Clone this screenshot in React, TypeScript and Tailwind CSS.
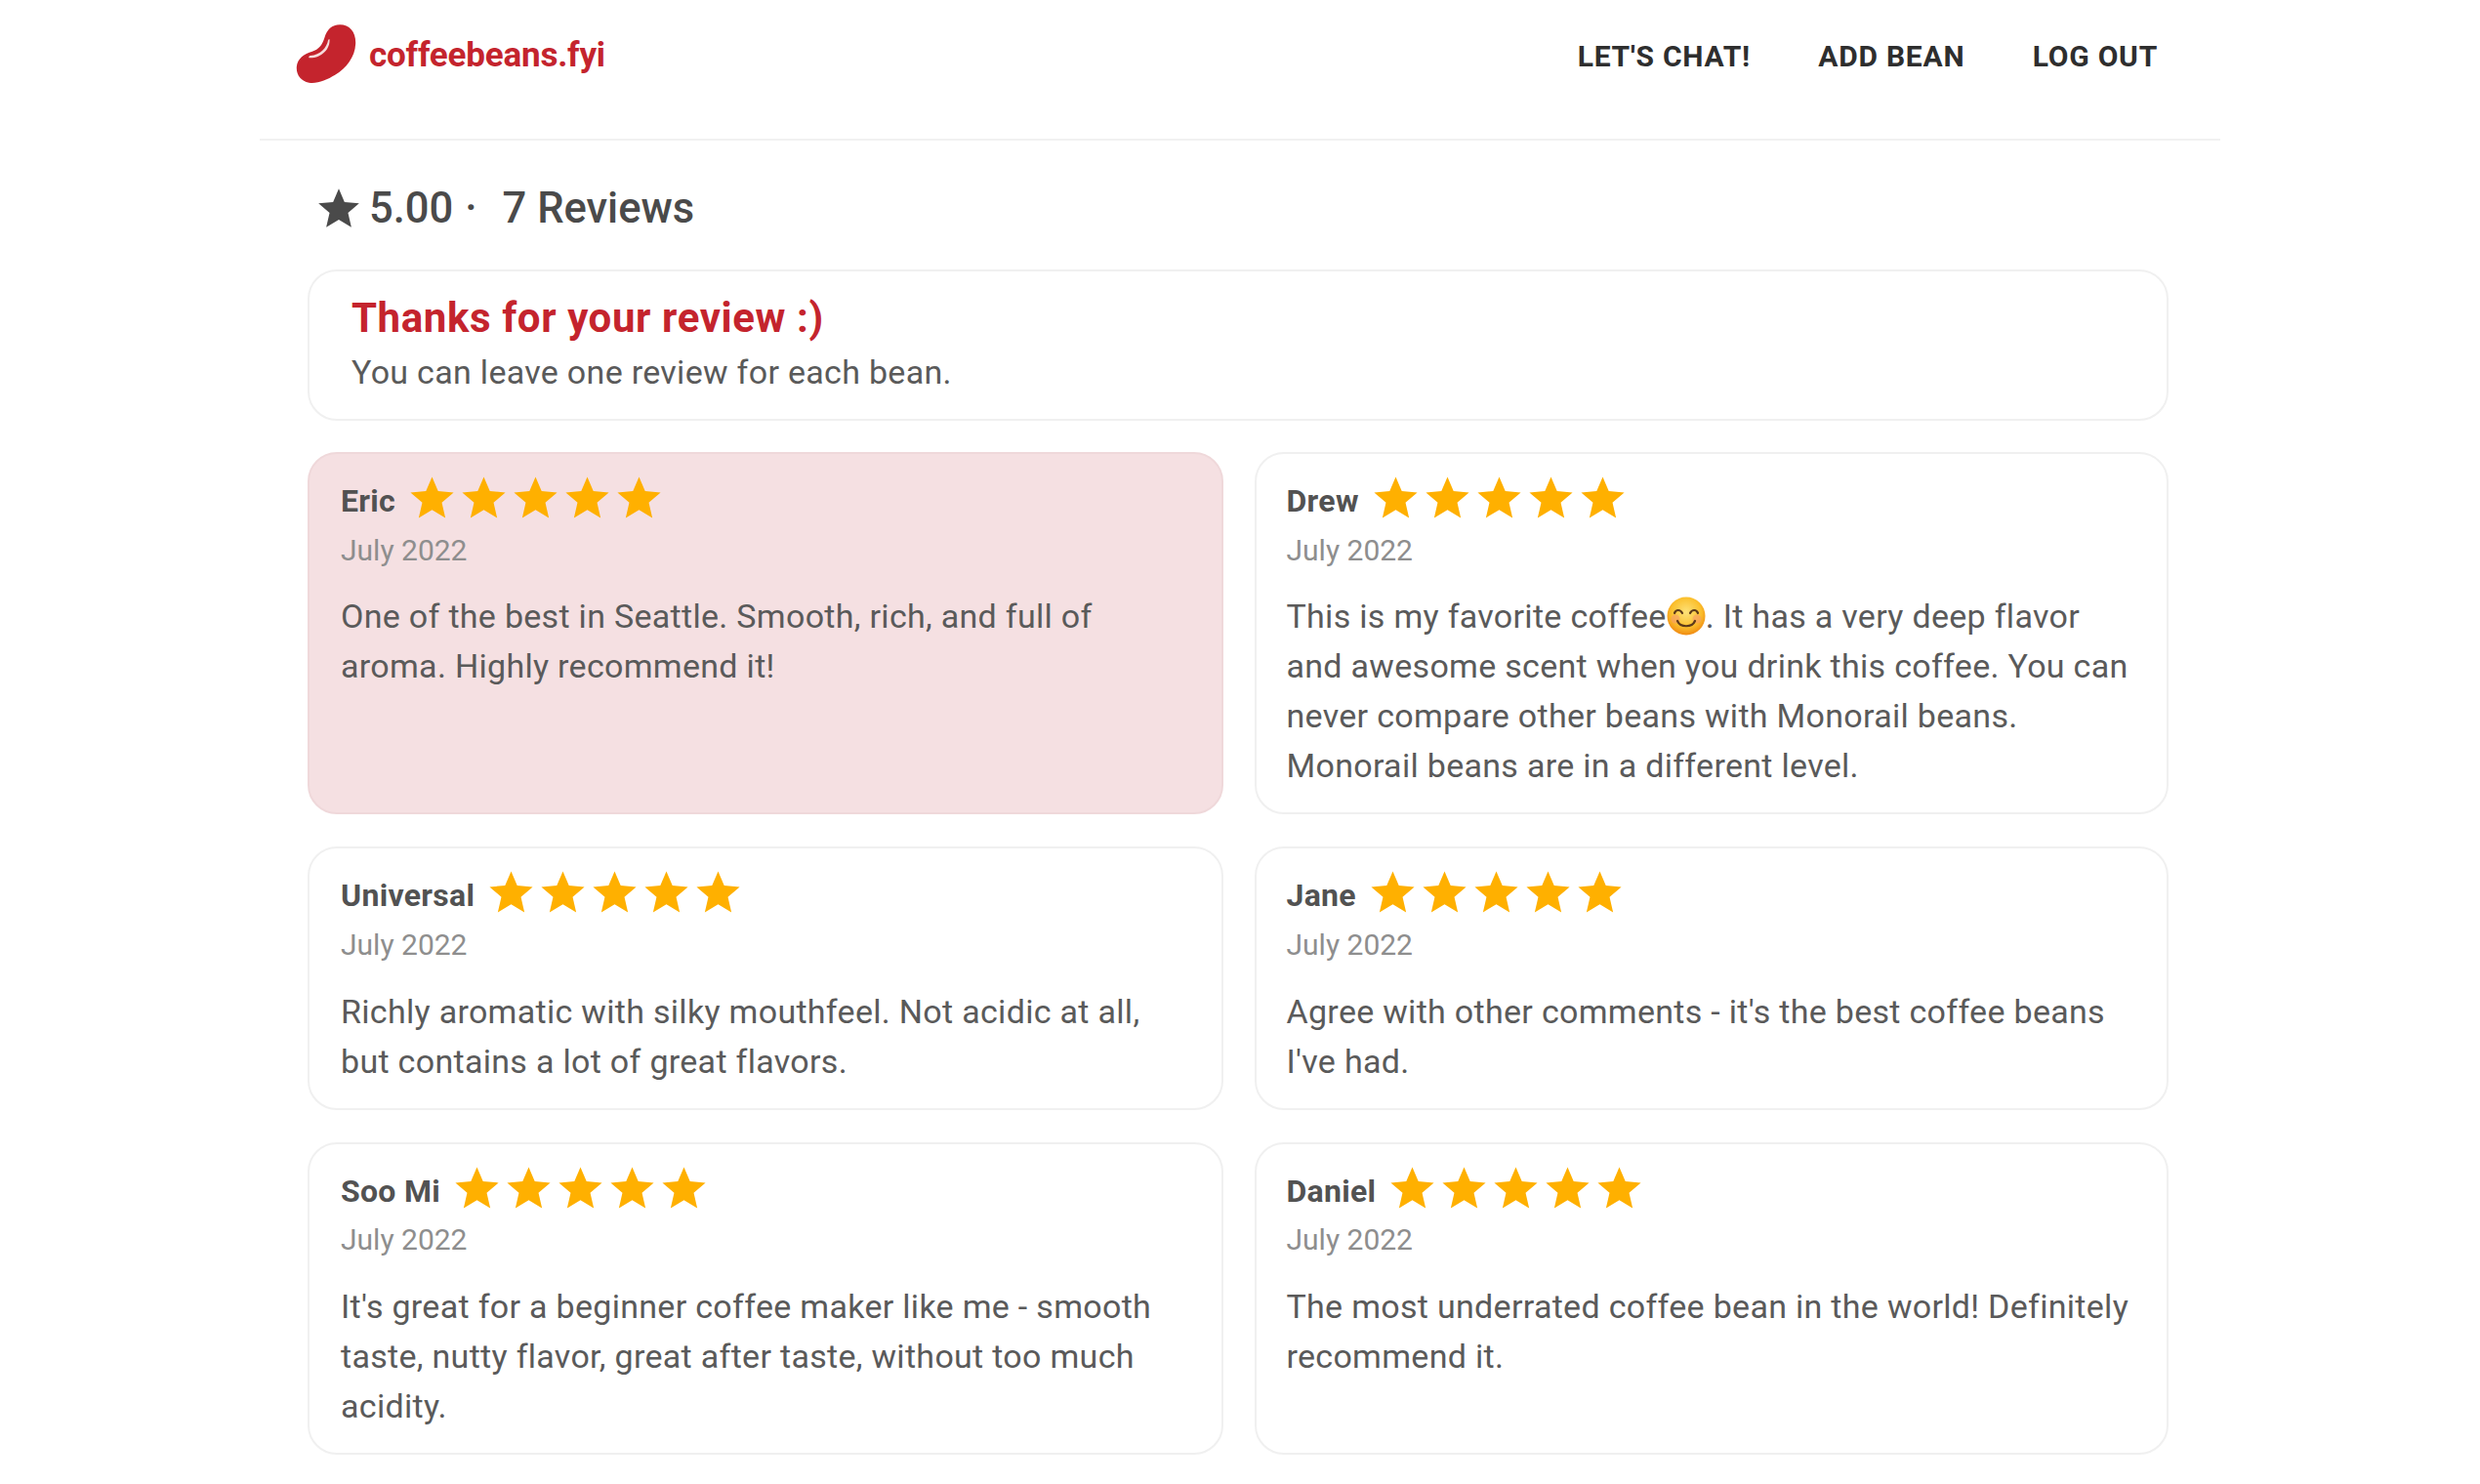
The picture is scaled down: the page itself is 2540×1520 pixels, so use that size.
const reviews = [
  { name: 'Eric', highlight: true, body: 'One of the best in Seattle. Smooth, rich, and full of aroma. Highly recommend it!' },
  { name: 'Drew', right: true, body: 'emoji' },
  { name: 'Universal', body: 'Richly aromatic with silky mouthfeel. Not acidic at all, but contains a lot of great flavors.' },
  { name: 'Jane', right: true, body: "Agree with other comments - it's the best coffee beans I've had." },
  { name: 'Soo Mi', body: "It's great for a beginner coffee maker like me - smooth taste, nutty flavor, great after taste, without too much acidity." },
  { name: 'Daniel', right: true, body: 'The most underrated coffee bean in the world! Definitely recommend it.' },
]

const STAR = 'M12 17.27L18.18 21l-1.64-7.03L22 9.24l-7.19-.61L12 2 9.19 8.63 2 9.24l5.46 4.73L5.82 21z'

function Star({ className }: { className: string }) {
  return (
    <svg viewBox="0 0 24 24" className={className} fill="currentColor">
      <path d={STAR} />
    </svg>
  )
}

function Bean() {
  return (
    <svg viewBox="130 75 185 180" className="w-[62px] h-[60px] shrink-0">
      <path
        fill="#c4242d"
        d="M265 76C295 76 315 100 313 135C311 175 285 210 250 230C225 245 195 258 170 254C145 250 130 230 132 205C134 180 155 165 180 158C200 152 210 140 218 115C225 92 240 76 265 76Z"
      />
      <path fill="#f6dcdc" d="M233 120C236 150 208 180 170 178C168 175 170 172 174 171C205 168 224 148 229 122Z" />
    </svg>
  )
}

function Smile() {
  return (
    <svg viewBox="0 0 40 40" className="inline-block w-[40px] h-[40px] align-[-8px]">
      <defs>
        <radialGradient id="face" cx="50%" cy="40%" r="60%">
          <stop offset="0%" stopColor="#fde27a" />
          <stop offset="65%" stopColor="#fbc02d" />
          <stop offset="100%" stopColor="#f08a12" />
        </radialGradient>
      </defs>
      <circle cx="20" cy="20" r="19.5" fill="url(#face)" />
      <circle cx="9" cy="23" r="4.5" fill="#f79a6a" opacity="0.6" />
      <circle cx="31" cy="23" r="4.5" fill="#f79a6a" opacity="0.6" />
      <path d="M8 17c1.500-4 6-4 8 0M24 17c2-4 6.500-4 8 0" stroke="#5d3a1a" strokeWidth="2.200" fill="none" strokeLinecap="round" />
      <path d="M11 25c3 7 15 7 18 0" stroke="#5d3a1a" strokeWidth="2.200" fill="none" strokeLinecap="round" />
    </svg>
  )
}

function ReviewCard({ name, body, highlight, right }: { name: string; body: string; highlight?: boolean; right?: boolean }) {
  return (
    <div
      className={`box-border rounded-[30px] border-2 pt-[19px] pb-[22px] pr-[32px] ${right ? 'pl-[30.5px]' : 'pl-[32px]'} ${
        highlight ? 'bg-[#f5e0e2] border-[#efd8da]' : 'bg-white border-[#f0f0f0]'
      }`}
    >
      <div className="flex items-center h-[53px]">
        <span className="pt-[5px] text-[32px] tracking-[0.3px] font-bold text-[#525252] mr-[11px]">{name}</span>
        {[0, 1, 2, 3, 4].map((i) => (
          <Star key={i} className="w-[53px] h-[53px] text-[#ffb000]" />
        ))}
      </div>
      <div className="mt-[6.500px] text-[30px] leading-[40px] text-[#8e8e8e]">July 2022</div>
      <p className="mt-[22.900px] text-[34px] leading-[51px] tracking-[0.3px] text-[#5a5a5a]">
        {body === 'emoji' ? (
          <>
            This is my favorite coffee
            <Smile />. It has a very deep flavor and awesome scent when you drink this coffee. You can never compare other
            beans with Monorail beans. Monorail beans are in a different level.
          </>
        ) : (
          body
        )}
      </p>
    </div>
  )
}

export default function App() {
  return (
    <div className="min-h-[1520px] bg-white font-['Roboto',sans-serif]">
      <div className="w-[2008px] mx-auto">
        <header className="h-[144px] box-border border-b-2 border-[#f1f1f1] flex items-start justify-between pl-[37px] pr-[64px]">
          <div className="flex items-center gap-[13px] mt-[25px]">
            <Bean />
            <span className="pt-[4px] text-[35px] tracking-[-0.2px] font-bold text-[#c4242d]">coffeebeans.fyi</span>
          </div>
          <nav className="flex gap-[69.500px] mt-[38px] text-[30px] leading-[40px] font-bold tracking-[0.75px] text-[#2e2e2e]">
            <span>LET'S CHAT!</span>
            <span>ADD BEAN</span>
            <span>LOG OUT</span>
          </nav>
        </header>

        <div className="pl-[49px] pr-[53px]">
          <div className="flex items-center h-[50px] mt-[44.500px] pl-[7px] text-[43.500px] font-medium text-[#4a4a4a]">
            <Star className="w-[50px] h-[50px] mr-[6px]" />
            <span>5.00</span>
            <span className="ml-[12px]">·</span>
            <span className="ml-[26px]">7 Reviews</span>
          </div>

          <div className="box-border h-[155px] mt-[37.500px] rounded-[30px] border-2 border-[#f0f0f0] pl-[43px] pt-[23px]">
            <div className="text-[42px] leading-[50px] tracking-[0.6px] font-bold text-[#c4242d]">Thanks for your review :)</div>
            <div className="mt-[7.500px] text-[34px] leading-[44px] tracking-[0.3px] text-[#5a5a5a]">
              You can leave one review for each bean.
            </div>
          </div>

          <div className="grid grid-cols-[938px_936px] gap-x-[32px] gap-y-[33px] mt-[32px]">
            {reviews.map((r) => (
              <ReviewCard key={r.name} name={r.name} body={r.body} highlight={r.highlight} right={r.right} />
            ))}
          </div>
        </div>
      </div>
    </div>
  )
}
